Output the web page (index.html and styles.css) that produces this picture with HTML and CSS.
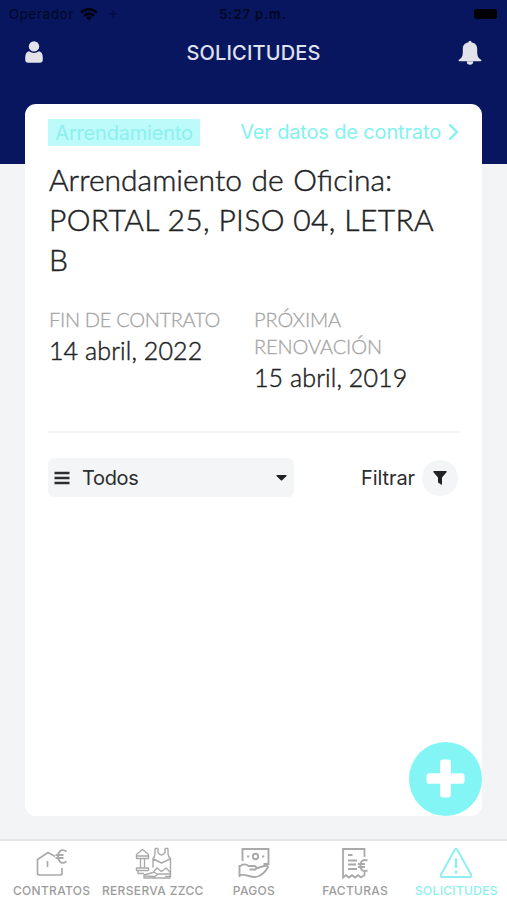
FILE: index.html
```html
<!DOCTYPE html>
<html lang="es">
<head>
<meta charset="utf-8">
<title>Solicitudes</title>
<link rel="stylesheet" href="styles.css">
</head>
<body>
<div class="app">
  <header class="header">
    <div class="status">
      <div class="carrier"><span class="operator">Operador</span>
        <svg class="wifi" width="18" height="13" viewBox="0 0 18 13" fill="none" stroke="#01030f" stroke-width="2.5"><path d="M1 4.5Q9-2.2 17 4.5M4 7.7Q9 3.5 14 7.7"/><path d="M6.2 9.5Q9 7.2 11.8 9.5L9 12.5z" fill="#01030f" stroke="none"/></svg>
        <svg class="spinner" width="10" height="10" viewBox="0 0 10 10" stroke="#050d4a" stroke-width="1.3"><path d="M5 1v8M1 5h8"/></svg>
      </div>
      <span class="time">5:27 p.m.</span>
      <div class="power"><i class="battery"></i></div>
    </div>
    <div class="navbar">
      <svg width="18" height="22" viewBox="0 0 18 22" fill="#e2e3e9"><circle cx="9" cy="5.4" r="5.2"/><path d="M4 10.2Q9 13.8 14 10.2Q17.8 11.3 17.8 16.5V18.5Q17.8 21.7 14.7 21.7H3.3Q.2 21.7.2 18.5V16.5Q.2 11.3 4 10.2z"/></svg>
      <h1 class="heading">SOLICITUDES</h1>
      <svg width="24" height="25" viewBox="0 0 24 25" fill="#e2e3e9"><path d="M10.5 2.2a1.5 1.5 0 0 1 3 0C17.5 3 19.2 5.5 19.2 9v3.5c0 4 1.3 5.6 3.8 7.2.9.6.4 1.5-.5 1.5h-21c-.9 0-1.4-.9-.5-1.5 2.500-1.600 3.800-3.200 3.800-7.200V9c0-3.500 1.700-6 5.700-6.800zM8.800 21.500h6.400a3.200 3.200 0 0 1-6.400 0z"/></svg>
    </div>
  </header>

  <main class="card">
    <div class="toprow">
      <span class="tag">Arrendamiento</span>
      <a class="link">Ver datos de contrato <svg width="11" height="18" viewBox="0 0 11 18" fill="none" stroke="#83f2f2" stroke-width="2.4"><path d="M1.2 1.5L9 9l-7.8 7.5"/></svg></a>
    </div>
    <h2 class="title"><span class="line-name">Arrendamiento de Oficina:</span><br><span class="line-place">PORTAL 25, PISO 04, LETRA</span><br>B</h2>
    <div class="dates">
      <div class="date"><div class="label">FIN DE CONTRATO</div><div class="value">14 abril, 2022</div></div>
      <div class="date"><div class="label">PRÓXIMA<br>RENOVACIÓN</div><div class="value">15 abril, 2019</div></div>
    </div>
    <div class="tools">
      <div class="select">
        <svg width="16" height="14" viewBox="0 0 16 14" stroke="#2b2d2f" stroke-width="2.4"><path d="M.5 2h15M.5 7h15M.5 12h15"/></svg>
        <span class="choice">Todos</span>
        <svg width="11" height="6" viewBox="0 0 11 6" fill="#202224"><path d="M1 0h9q1 0 .5 1L6.2 5.3q-.7.6-1.4 0L.5 1Q0 0 1 0z"/></svg>
      </div>
      <div class="filter"><span>Filtrar</span>
        <i class="funnel"><svg width="14" height="14" viewBox="0 0 14 14" fill="#202224"><path d="M1 0H13Q14.200 .2 13.500 1.300L9 6.500V13Q8.800 14.200 8 13.600L5.400 11.700Q5 11.400 5 11V6.500L.5 1.300Q-.2 .2 1 0Z"/></svg></i>
      </div>
    </div>
    <button class="add" aria-label="Añadir"><svg width="39" height="39" viewBox="0 0 40 40" fill="#fff"><rect x="14.500" y=".5" width="11" height="39" rx="3"/><rect x=".5" y="14.500" width="39" height="11" rx="3"/></svg></button>
  </main>

  <nav class="tabs">
    <div class="tab">
      <svg width="34" height="34" viewBox="0 0 34 34" fill="none" stroke="#aaa" stroke-width="1.700"><path d="M20 9.500L13 5.500 2.500 12.500V26q0 2 2 2H25q2 0 2-2V21M12.500 14v6"/><path d="M31.500 4.500C26 1 23 5 23 9.500S26 18 31.500 14.500M20.500 8h8M20.500 11h8" stroke-width="1.900"/></svg>
      <span>CONTRATOS</span></div>
    <div class="tab">
      <svg width="40" height="34" viewBox="0 0 40 34" fill="none" stroke="#aaa" stroke-width="1.400" stroke-linejoin="round"><path d="M7 4.500L9.500 2.500 12 4.500 15.500 7.500V9H3.500V7.500zM3.500 9v2.500h12V9M7.500 11.500V21M11.500 11.500V21M3.500 21h12v2.500h-12zM5 23.500v3h6"/><path d="M22 1.500v5q0 3-2 5v9M25 1.500v4q3.500 5 7 0v-4M35 1.500v5q0 3 2.500 5v18H32M22 1.500h3M32 1.500h3M20.500 12l8 4 8.500-4"/><path d="M11 28l9-2.500 4-4.500 4.500 3.500L33 21l4 4v6H11zM12 29l10 .500 3-2.500h11M20 24.500l4 2.500"/></svg>
      <span class="tight">RERSERVA ZZCC</span></div>
    <div class="tab">
      <svg width="34" height="34" viewBox="0 0 34 34" fill="none" stroke="#aaa" stroke-width="1.900"><path d="M5.500 14V2h26v15h-5"/><circle cx="18.500" cy="9.500" r="2.700"/><path d="M10 9.500h2.200M25 9.500h2.200"/><path d="M2.500 18v12M2.500 19.500q5-4 9-.5h6q3 1 1 3.500h-6M19 21.500l8-2.500q4-.5 4 1-3 6-9 9-4 2-10 0-5-1.500-9-1"/></svg>
      <span>PAGOS</span></div>
    <div class="tab">
      <svg width="34" height="34" viewBox="0 0 34 34" fill="none" stroke="#aaa" stroke-width="1.800"><path d="M26.500 10V2H5V30.500l3-2.300 3 2.300 3-2.300 3 2.300 3-2.300 3 2.300 3.500-2.300V25M10 8h4.500M10 13.500h9M10 17.500h8M10 22h9"/><path d="M29.500 13.500q-7-2-7 5t7 5M20 17h7M20 20h7" stroke-width="2.100"/></svg>
      <span>FACTURAS</span></div>
    <div class="tab active">
      <svg width="34" height="34" viewBox="0 0 34 34" fill="none" stroke="#8eeff0" stroke-width="2" stroke-linejoin="round"><path d="M15.600 3q1.400-2.400 2.800 0L32 27.500q1 2.500-1.500 2.500h-27Q1 30 2 27.500z"/><path d="M17 11.500v9.500M17 23.500v3" stroke-width="2.400"/></svg>
      <span>SOLICITUDES</span></div>
  </nav>
</div>
</body>
</html>
```
FILE: styles.css
```css
* { box-sizing: border-box; }
body { margin: 0; font-family: Inter, "Liberation Sans", sans-serif; color: #2b2d2f; }
.app { width: 507px; height: 900px; display: flex; flex-direction: column; background: #f2f4f5; overflow: hidden; }
svg { display: block; flex: none; }

.header { height: 164px; flex: none; background: #08155f; }
.status { height: 28px; padding: 0 10px 0 9px; display: grid; grid-template-columns: 1fr auto 1fr; align-items: center; font-size: 13px; color: #020720; }
.carrier { display: flex; align-items: center; }
.operator { letter-spacing: 0.85px; }
.wifi { margin-left: 6px; }
.spinner { margin-left: 10px; }
.time { font-weight: 600; letter-spacing: 0.9px; }
.power { display: flex; justify-content: flex-end; }
.battery { width: 23px; height: 10px; border-radius: 3px; background: #000; }
.navbar { height: 48px; padding: 0 25px; display: flex; align-items: center; justify-content: space-between; }
.heading { margin: 1px -6px 0 0; font-size: 20px; font-weight: 500; letter-spacing: 0.15px; color: #dfe2ee; }

.card { position: relative; width: 457px; height: 712px; flex: none; margin: -60px 0 0 25px; padding: 14px 23px; background: #fff; border-radius: 11px; }
.toprow { height: 28px; display: flex; align-items: center; justify-content: space-between; font-size: 20px; }
.tag { width: 152px; height: 27px; line-height: 28px; text-align: center; letter-spacing: -0.2px; background: #bdfafa; color: #8cf0ef; }
.link { display: flex; align-items: center; gap: 7px; letter-spacing: -0.15px; color: #83f2f2; }
.title { margin: 13px 0 0 1px; font: 300 30px/40px Lato, sans-serif; color: #202224; white-space: nowrap; -webkit-text-stroke: 0.45px #202224; }
.line-name { word-spacing: 1.5px; }
.line-place { letter-spacing: 0.37px; }
.dates { margin-top: 27px; height: 127px; display: grid; grid-template-columns: 205px 1fr; border-bottom: 2px solid #f3f4f5; padding-left: 1px; font-family: Lato, sans-serif; }
.label { font-size: 20px; line-height: 27px; font-weight: 300; letter-spacing: -0.3px; color: #a4a4a4; -webkit-text-stroke: 0.3px #a4a4a4; }
.date:last-child .label { letter-spacing: -0.1px; }
.value { font-size: 25px; line-height: 34px; font-weight: 300; letter-spacing: 0.1px; color: #202224; white-space: nowrap; -webkit-text-stroke: 0.45px #202224; }
.tools { margin-top: 25px; display: flex; align-items: center; justify-content: space-between; font-size: 20px; }
.select { width: 246px; height: 39px; padding: 0 7px 0 6px; display: flex; align-items: center; background: #f3f5f6; border-radius: 6px; }
.choice { flex: 1; margin-left: 12px; letter-spacing: -0.35px; }
.filter { display: flex; align-items: center; gap: 7px; margin-right: 1px; letter-spacing: -0.1px; }
.funnel { width: 36px; height: 36px; border-radius: 50%; background: #f3f5f6; display: flex; align-items: center; justify-content: center; }
.add { position: absolute; right: 0; bottom: 0; width: 73px; height: 74px; border: 0; padding: 0 0 2px; border-radius: 50%; background: #83f5f4; display: flex; align-items: center; justify-content: center; }

.tabs { height: 61px; margin-top: auto; flex: none; padding-left: 1px; display: grid; grid-template-columns: repeat(5, minmax(0, 1fr)); background: #fff; border-top: 2px solid #e5e6e8; }
.tab { display: flex; flex-direction: column; align-items: center; padding-top: 6px; font-size: 12px; line-height: 20px; font-weight: 500; letter-spacing: 0.3px; color: #9c9c9c; white-space: nowrap; }
.tight { letter-spacing: 0.35px; }
.active { color: #8eeff0; }
```
